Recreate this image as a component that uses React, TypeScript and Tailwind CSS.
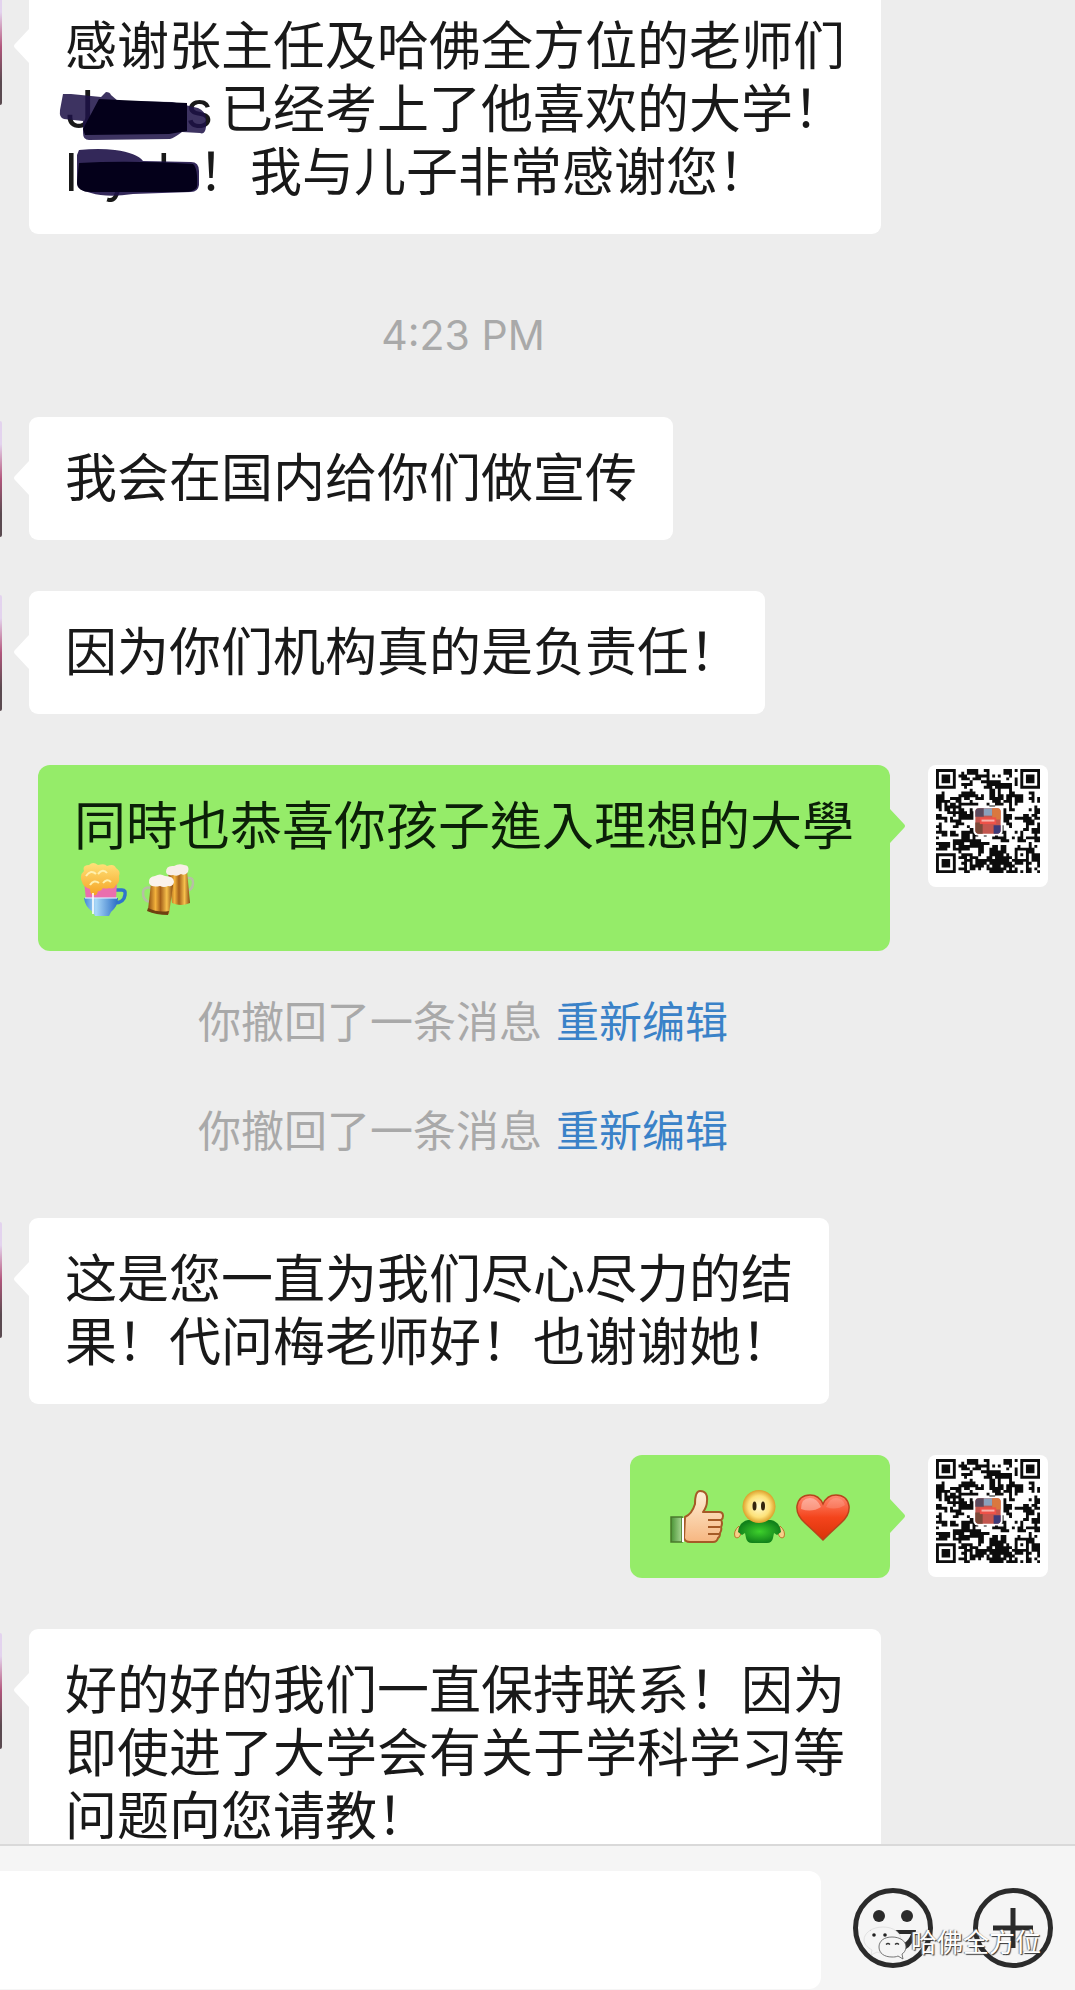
import clsx from "clsx";
import type { ReactNode } from "react";

const QR_SIZE = 37;

// Finder squares sit in three corners, the small alignment square in the fourth
function isRing(x: number, y: number, left: number, top: number, size: number) {
  const dx = x - left;
  const dy = y - top;
  if (dx < 0 || dy < 0 || dx >= size || dy >= size) return null;
  const edge = Math.min(dx, dy, size - 1 - dx, size - 1 - dy);
  return edge !== 1;
}

function buildQrPath() {
  let seed = 20231;
  let d = "";
  let above: boolean[] = [];
  for (let y = 0; y < QR_SIZE; y++) {
    const row: boolean[] = [];
    for (let x = 0; x < QR_SIZE; x++) {
      seed = (seed * 1103515245 + 12345) % 2147483648;
      // neighbours pull a module towards their own colour, so strokes join up
      let limit = 0.5;
      if (x > 0) limit += row[x - 1] ? -0.12 : 0.12;
      if (y > 0) limit += above[x] ? -0.1 : 0.1;
      let dark = seed / 2147483648 > limit;
      row.push(dark);
      const quiet = (x < 8 && y < 8) || (x > 28 && y < 8) || (x < 8 && y > 28);
      if (quiet) dark = false;
      const ring =
        isRing(x, y, 0, 0, 7) ??
        isRing(x, y, 30, 0, 7) ??
        isRing(x, y, 0, 30, 7) ??
        isRing(x, y, 28, 28, 5);
      if (ring !== null) dark = ring;
      if (dark) d += `M${x} ${y}h1.03v1.03h-1.03z`;
    }
    above = row;
  }
  return d;
}

const QR_PATH = buildQrPath();

function QrAvatar() {
  return (
    <div className="w-[120px] h-[122px] shrink-0 rounded-lg bg-white flex justify-center pt-1">
      <svg viewBox="0 0 37 37" className="w-[104px] h-[104px]" role="img" aria-label="QR">
        <path d={QR_PATH} fill="#0c0c0c" />
        <rect x="13.3" y="13.3" width="10.4" height="10.4" rx="1.6" fill="#fff" />
        <rect x="14" y="14" width="9" height="9" rx="1.2" fill="#c4574f" />
        <path d="M14 15.2q0-1.2 1.2-1.2H17v3h-3z" fill="#5b4a5e" />
        <path d="M17 14h3v2.6h-3z" fill="#8ba0bb" />
        <path d="M20 14h1.8q1.2 0 1.2 1.2V18h-3z" fill="#d9783f" />
        <path d="M14 19h2.6v4h-1.4q-1.2 0-1.2-1.2z" fill="#7a4a3a" />
        <path d="M20.5 20H23v1.8q0 1.2-1.2 1.2h-1.3z" fill="#3d3b78" />
        <rect x="15.6" y="17.2" width="5.8" height="2.4" fill="#ee5148" />
        <rect x="16.2" y="18" width="4.6" height=".7" fill="#f7b3ac" />
      </svg>
    </div>
  );
}

function Incoming({ tight = false, children }: { tight?: boolean; children: ReactNode }) {
  return (
    <div className="flex items-start">
      <div
        className="w-[2px] h-[116px] mt-1 shrink-0 rounded-r-[2px] bg-linear-to-b from-[#e3d3ee] from-20% via-[#b0557c] via-50% to-[#5a4a50] to-80%"
        aria-hidden
      />
      <svg viewBox="0 0 16 34" className="w-4 h-[34px] ml-[11px] mt-[44px] shrink-0" aria-hidden>
        <path d="M16 0v34L2 19q-2-2 0-4z" fill="#fff" />
      </svg>
      <div
        className={clsx(
          "rounded-[9px] bg-white py-[30px] pl-9 text-[52px] leading-[63px] text-[#191919]",
          tight ? "pr-6" : "pr-9",
        )}
      >
        {children}
      </div>
    </div>
  );
}

function Outgoing({ children }: { children: ReactNode }) {
  return (
    <div className="flex items-start justify-end pr-[27px]">
      <div className="rounded-[12px] bg-[#95ec69] px-9 py-[30px] text-[52px] leading-[63px] text-[#0b1f08]">
        {children}
      </div>
      <svg viewBox="0 0 16 34" className="w-4 h-[34px] mr-[22px] mt-[44px] shrink-0" aria-hidden>
        <path d="M0 0v34l14-15q2-2 0-4z" fill="#95ec69" />
      </svg>
      <QrAvatar />
    </div>
  );
}

function Recalled() {
  return (
    <div className="flex justify-center gap-[14px] text-[43px] leading-10">
      <span className="text-[#a9a9a9]">你撤回了一条消息</span>
      <button type="button" className="text-[#3a82c8]">
        重新编辑
      </button>
    </div>
  );
}

function CupEmoji() {
  return (
    <svg viewBox="0 0 54 54" className="w-[54px] h-[54px]" role="img" aria-label="干杯">
      <defs>
        <linearGradient id="cup" x1="0" x2="1">
          <stop offset="0" stopColor="#3f86d6" />
          <stop offset=".35" stopColor="#a9d8f8" />
          <stop offset="1" stopColor="#2a6cc4" />
        </linearGradient>
        <linearGradient id="foam" x1="0" y1="0" x2="0" y2="1">
          <stop offset="0" stopColor="#ffe27a" />
          <stop offset="1" stopColor="#f5a324" />
        </linearGradient>
      </defs>
      <path d="M38 27h6q4 0 3 5-1 8-11 8" fill="none" stroke="#2f74cb" strokeWidth="3.5" />
      <path d="M6 18h33l-1 19H8z" fill="#ea6fae" />
      <path d="M6 35h34q0 8-7 14l-2 4H17l-2-4q-8-5-9-14z" fill="url(#cup)" />
      <path d="M7 35h32" stroke="#d9ecff" strokeWidth="1.2" />
      <path
        d="M4 19Q1 12 6 8q-2-6 5-6 4-4 9 0 7-2 9 1 7-3 9 2 5 3 3 8 1 7-3 9-2 5-7 3-3 1-6 0-2 4-5 3-1 5-4 4-4 0-4-6Q5 24 4 19z"
        fill="url(#foam)"
      />
      <path d="M8 13q5-7 10-2M20 11q5-6 9-1M12 22q4-6 9-2M25 20q4-5 8-1" fill="none" stroke="#fff0ad" strokeWidth="2" />
      <path d="M15 30v21" stroke="#fff" strokeWidth="2" opacity=".8" />
    </svg>
  );
}

function BeerEmoji() {
  return (
    <svg viewBox="0 0 54 54" className="w-[54px] h-[54px]" role="img" aria-label="啤酒">
      <defs>
        <linearGradient id="beer" x1="0" x2="1">
          <stop offset="0" stopColor="#8a4b12" />
          <stop offset=".3" stopColor="#f3b23c" />
          <stop offset=".5" stopColor="#a5601a" />
          <stop offset=".75" stopColor="#f6c04c" />
          <stop offset="1" stopColor="#8a4b12" />
        </linearGradient>
      </defs>
      <path d="M46 15q7-1 6 6-1 7-8 7" fill="none" stroke="#b6c0a4" strokeWidth="2.5" />
      <path d="M27 9l19-1 3 32q-9 4-18 0z" fill="url(#beer)" />
      <path d="M25 9q0-7 8-6 5-3 10-1 6 0 4 7-3 4-7 2-4 3-8 1-6 1-7-3z" fill="#f8eee6" />
      <path d="M11 25q-9-2-9 5 0 8 7 9" fill="none" stroke="#b6c0a4" strokeWidth="2.5" />
      <path d="M10 20l22 2-4 29q-11 1-21-4z" fill="url(#beer)" />
      <path d="M7 45q10 5 21 3l-1 4q-12 0-21-4z" fill="#6f4010" />
      <path d="M8 20q-1-6 6-7 5-3 10 0 9 0 9 6-1 5-6 4-4 2-8 0-9 2-11-3z" fill="#fbf3ec" />
    </svg>
  );
}

function ThumbEmoji() {
  return (
    <svg viewBox="0 0 54 54" className="w-[54px] h-[54px]" role="img" aria-label="赞">
      <defs>
        <linearGradient id="skin" x1="0" y1="0" x2="0" y2="1">
          <stop offset="0" stopColor="#fff0d6" />
          <stop offset="1" stopColor="#f6b681" />
        </linearGradient>
        <linearGradient id="cuff" x1="0" x2="1">
          <stop offset="0" stopColor="#4a9436" />
          <stop offset="1" stopColor="#a9d894" />
        </linearGradient>
      </defs>
      <path d="M1 27h11v25H1z" fill="url(#cuff)" stroke="#4b7a2c" strokeWidth="1.5" />
      <path
        d="M15 27q7-3 10-13Q25 1 30 1q8 0 7 10 0 6-4 11h16q4 0 4 4 0 3-2 4 2 3 0 7 1 3-1 6 0 4-2 5-1 4-5 4H20q-5 0-6-4z"
        fill="url(#skin)"
        stroke="#a55a26"
        strokeWidth="2"
        strokeLinejoin="round"
      />
      <path d="M38 30h13M38 37h12M38 44h11" stroke="#a55a26" strokeWidth="2" />
      <path d="M13 28v24" stroke="#fff" strokeWidth="2" />
    </svg>
  );
}

function PersonEmoji() {
  return (
    <svg viewBox="0 0 54 54" className="w-[54px] h-[54px]" role="img" aria-label="转圈">
      <defs>
        <radialGradient id="face">
          <stop offset="0" stopColor="#fffbd0" />
          <stop offset=".65" stopColor="#fde27a" />
          <stop offset="1" stopColor="#dba02a" />
        </radialGradient>
        <radialGradient id="shirt">
          <stop offset="0" stopColor="#3ed02c" />
          <stop offset="1" stopColor="#11821a" />
        </radialGradient>
      </defs>
      <path d="M6 36q-6 5-4 11 4 3 6-4zM47 36q6 5 4 11-4 3-6-4z" fill="#f7cf8a" stroke="#b77a2c" />
      <path d="M15 30h23q9 2 10 12l-4 3-3-2-1 5q-1 5-6 5H19q-5 0-6-5l-1-5-3 2-4-3q1-10 10-12z" fill="url(#shirt)" />
      <circle cx="26" cy="16.5" r="16.5" fill="url(#face)" />
      <ellipse cx="21.5" cy="16" rx="2" ry="4.5" fill="#33240c" />
      <ellipse cx="30" cy="16" rx="2" ry="4.5" fill="#33240c" />
    </svg>
  );
}

function HeartEmoji() {
  return (
    <svg viewBox="0 0 54 54" className="w-[54px] h-[54px]" role="img" aria-label="爱心">
      <defs>
        <linearGradient id="heart" x1="0" y1="0" x2="0" y2="1">
          <stop offset="0" stopColor="#ff8a70" />
          <stop offset=".5" stopColor="#f4441c" />
          <stop offset="1" stopColor="#d93208" />
        </linearGradient>
      </defs>
      <path
        d="M27 50Q20 43 9 33 0 25 1 16 3 5 14 5q9 0 13 9 4-9 13-9 11 0 13 11 1 9-8 17-11 10-18 17z"
        fill="url(#heart)"
        stroke="#b8441c"
        strokeWidth="1.5"
      />
      <path d="M5 19Q5 8 14 8q7 0 11 9-9 6-20 2z" fill="#fff" opacity=".35" />
      <path d="M30 17q4-9 10-9 7 0 9 7-9 6-19 2z" fill="#fff" opacity=".15" />
    </svg>
  );
}

// Name blacked out with a marker, only stray letter ends stay visible
function InkedFirst() {
  return (
    <span className="relative inline-flex justify-between w-[156px] pr-2 h-[63px] align-top">
      <span>J</span>
      <span>s</span>
      <svg viewBox="0 0 160 63" className="absolute -left-2 top-0 w-[160px] h-[63px]" aria-hidden>
        <path
          d="M6 16h8l30 3 5-5q4 0 5 3l7 6 54 1 26 6q7 3 8 10v9q-1 8-6 6l-18-1q-8 6-12 7l-81 1q-6 0-6-7V43L7 41q-5-1-4-9z"
          fill="#1d1147"
          opacity=".86"
        />
        <path d="M42 21q40 2 88 4v28l-18 3-84 1-2-6z" fill="#04001a" />
      </svg>
    </span>
  );
}

function InkedSecond() {
  return (
    <span className="relative inline-flex justify-between w-[133px] pr-7 h-[63px] align-top">
      <span>l</span>
      <span>y</span>
      <span>l</span>
      <svg viewBox="0 0 150 63" className="absolute -left-2 top-0 w-[150px] h-[63px]" aria-hidden>
        <path
          d="M22 9q20-2 36 0 22 3 28 11l48 1q8 0 8 9v14q-1 7-8 7l-58 2q-26 4-42-1-14-3-14-9V14z"
          fill="#1d1147"
          opacity=".9"
        />
        <path d="M22 22q50-3 114 1 5 4 4 23-2 5-14 5H34q-14 0-14-10z" fill="#04001a" />
      </svg>
    </span>
  );
}

function Watermark() {
  return (
    <div className="pointer-events-none absolute right-[34px] bottom-[30px] flex items-center gap-1">
      <svg viewBox="0 0 44 34" className="w-11 h-[34px]" aria-hidden>
        <path
          d="M20 1c11 0 18 6 18 13s-7 13-18 13c-2 0-4 0-6-1l-6 3 1-5C4 21 1 18 1 14 1 7 9 1 20 1z"
          fill="#f5f5f5"
          stroke="#dcdcdc"
          strokeWidth=".8"
        />
        <circle cx="11" cy="9" r="1.8" fill="#222" />
        <circle cx="22" cy="9" r="1.8" fill="#222" />
        <path
          d="M29 11c8 0 14 4 14 10 0 3-2 6-4 7l1 5-5-3c-2 1-4 1-6 1-8 0-13-4-13-10s5-10 13-10z"
          fill="#f5f5f5"
          stroke="#555"
          strokeWidth=".8"
        />
        <path d="M23 18.5q2-2 4 0M32 18.5q2-2 4 0" fill="none" stroke="#333" strokeWidth="1.2" />
      </svg>
      <span className="text-[26px] leading-[34px] text-white [text-shadow:1px_1px_1px_#333,-1px_0_1px_#888]">
        哈佛全方位
      </span>
    </div>
  );
}

export default function App() {
  return (
    <div className="flex h-screen flex-col overflow-hidden bg-[#ededed] font-['Inter','Noto_Sans_CJK_SC',sans-serif]">
      <main className="min-h-0 flex-1 overflow-hidden">
        <div className="-mt-[15px] flex flex-col gap-[51px]">
          <Incoming>
            <p>感谢张主任及哈佛全方位的老师们</p>
            <p>
              <InkedFirst />
              已经考上了他喜欢的大学！
            </p>
            <p>
              <InkedSecond />
              ！我与儿子非常感谢您！
            </p>
          </Incoming>

          <time className="block pr-[149px] pt-5 text-center text-[41px] leading-[61px] text-[#a9a9a9]">
            4:23 PM
          </time>

          <Incoming>
            <p>我会在国内给你们做宣传</p>
          </Incoming>
          <Incoming tight>
            <p>因为你们机构真的是负责任！</p>
          </Incoming>

          <Outgoing>
            <p lang="zh-Hant" className="font-['Inter','Noto_Sans_CJK_TC',sans-serif]">
              同時也恭喜你孩子進入理想的大學
            </p>
            <div className="flex h-[63px] items-center gap-[9px] px-1">
              <CupEmoji />
              <BeerEmoji />
            </div>
          </Outgoing>

          <div className="flex flex-col gap-[69px] pr-[149px] pb-4">
            <Recalled />
            <Recalled />
          </div>

          <Incoming>
            <p>这是您一直为我们尽心尽力的结</p>
            <p>果！代问梅老师好！也谢谢她！</p>
          </Incoming>

          <Outgoing>
            <div className="flex h-[63px] items-center gap-[9px] px-1">
              <ThumbEmoji />
              <PersonEmoji />
              <HeartEmoji />
            </div>
          </Outgoing>

          <Incoming>
            <p>好的好的我们一直保持联系！因为</p>
            <p>即使进了大学会有关于学科学习等</p>
            <p>问题向您请教！</p>
          </Incoming>
        </div>
      </main>

      <footer className="relative flex h-[146px] shrink-0 items-start gap-10 border-t-2 border-[#d9d9d9] bg-[#f5f5f5] pr-[22px]">
        <input
          type="text"
          aria-label="消息"
          className="mt-[25px] mr-[-8px] h-[118px] min-w-0 flex-1 rounded-r-[12px] bg-white px-6 text-[52px] outline-none"
        />
        <button type="button" aria-label="表情" className="mt-[42px]">
          <svg viewBox="0 0 80 80" className="w-20 h-20">
            <circle cx="40" cy="40" r="37.5" fill="none" stroke="#2b2b2b" strokeWidth="5" />
            <circle cx="26" cy="28" r="6" fill="#2b2b2b" />
            <circle cx="54" cy="28" r="6" fill="#2b2b2b" />
            <path d="M17 42h46q-2 22-23 22T17 42z" fill="#2b2b2b" />
            <path d="M22 46h36q-4 12-18 12T22 46z" fill="#f5f5f5" />
          </svg>
        </button>
        <button type="button" aria-label="更多" className="mt-[42px]">
          <svg viewBox="0 0 80 80" className="w-20 h-20">
            <circle cx="40" cy="40" r="37.5" fill="none" stroke="#2b2b2b" strokeWidth="5" />
            <path d="M40 20v40M20 40h40" stroke="#2b2b2b" strokeWidth="5" />
          </svg>
        </button>
        <Watermark />
      </footer>
    </div>
  );
}
